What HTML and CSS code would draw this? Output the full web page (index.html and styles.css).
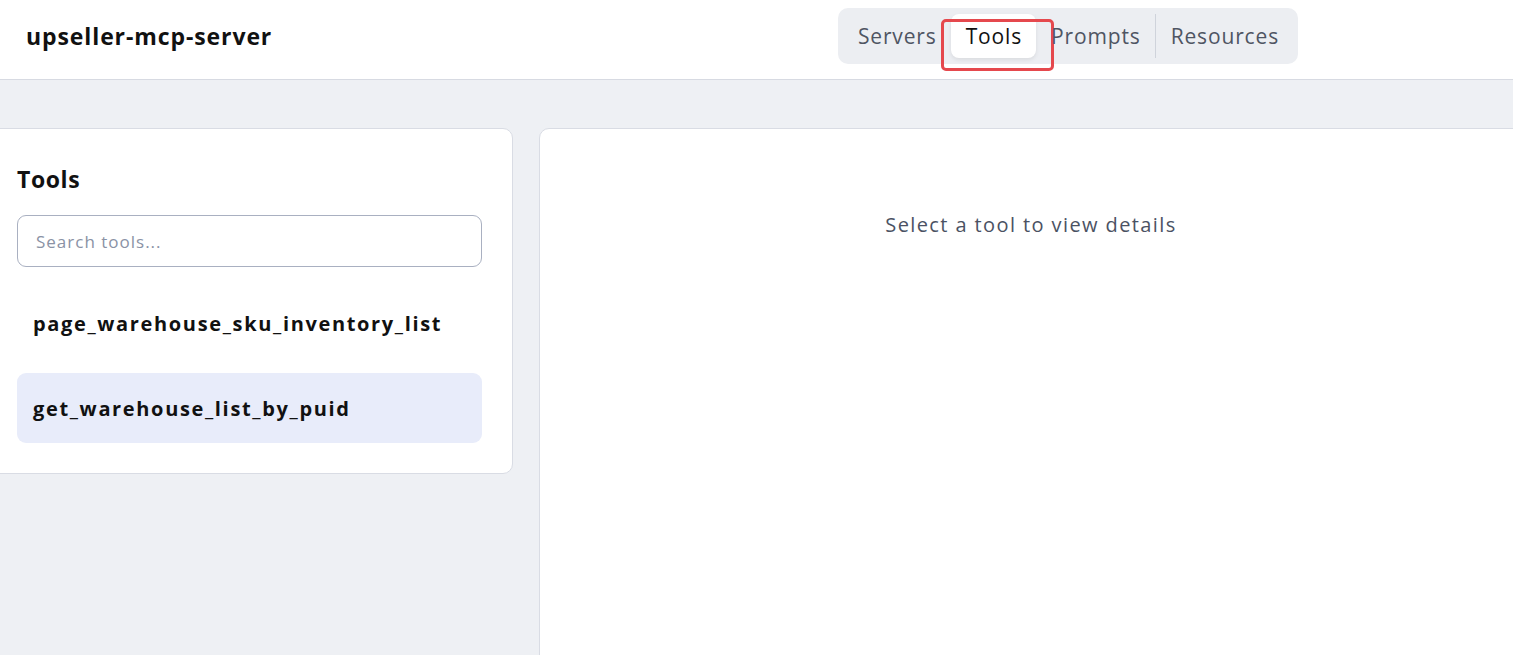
FILE: index.html
```html
<!DOCTYPE html>
<html lang="en">
  <head>
    <meta charset="UTF-8" />
    <meta name="viewport" content="width=device-width, initial-scale=1.0" />
    <title>upseller-mcp-server</title>
    <link rel="stylesheet" href="styles.css">
  </head>
  <body>
    <header class="topbar">
      <h1 class="server-name">upseller-mcp-server</h1>
      <nav class="tabs">
        <button class="tab">Servers</button>
        <button class="tab active">Tools<span class="tab-mark"></span></button>
        <button class="tab">Prompts</button>
        <span class="tab-divider"></span>
        <button class="tab">Resources</button>
      </nav>
    </header>

    <main class="workspace">
      <section class="panel tool-list">
        <h2>Tools</h2>
        <input class="search" type="text" placeholder="Search tools..." />
        <ul class="items">
          <li class="item">page_warehouse_sku_inventory_list</li>
          <li class="item selected">get_warehouse_list_by_puid</li>
        </ul>
      </section>

      <section class="panel tool-detail">
        <p class="empty">Select a tool to view details</p>
      </section>
    </main>
  </body>
</html>
```

FILE: styles.css
```css
body {
  font-family: "Open Sans", "Noto Sans", sans-serif;
  margin: 0;
  padding: 0;
  background: #eef0f4;
  color: #111;
  overflow: hidden;
  height: 655px;
}

.topbar {
  height: 79px;
  background: #ffffff;
  border-bottom: 1px solid #d7dae2;
  display: flex;
  align-items: center;
  padding-left: 26px;
}

.server-name {
  margin: 0;
  font-size: 23px;
  font-weight: 700;
  letter-spacing: 0.9px;
  position: relative;
  top: -4px;
}

.tabs {
  margin-left: auto;
  margin-right: 215px;
  align-self: flex-start;
  margin-top: 8px;
  display: flex;
  align-items: center;
  background: #eceef2;
  border-radius: 10px;
  padding: 6px 5px;
}

.tab {
  font-family: inherit;
  font-size: 21px;
  letter-spacing: 0.85px;
  color: #4f5563;
  background: none;
  border: none;
  height: 44px;
  padding: 0 14px 0 15px;
  border-radius: 8px;
  cursor: pointer;
  position: relative;
}

.tab.active {
  background: #ffffff;
  color: #111;
  box-shadow: 0 2px 4px rgba(0, 0, 0, 0.08);
}

.tab-divider {
  width: 1px;
  height: 44px;
  background: #cfd3db;
}

/* red outline around the current tab */
.tab-mark {
  position: absolute;
  left: -10px;
  right: -18px;
  top: 5px;
  bottom: -13px;
  border: 3px solid #e5484d;
  border-radius: 5px;
  pointer-events: none;
}

.workspace {
  display: grid;
  grid-template-columns: 527px 1fr;
  gap: 26px;
  width: 1537px;
  margin-left: -14px;
  padding-top: 48px;
}

.panel {
  background: #ffffff;
  border: 1px solid #d9dce4;
  border-radius: 10px;
  box-sizing: border-box;
}

.tool-list {
  padding: 30px;
  align-self: start;
}

.tool-list h2 {
  margin: 0 0 16px;
  font-size: 23px;
  font-weight: 700;
  letter-spacing: 0.6px;
  line-height: 40px;
}

.search {
  display: block;
  width: 100%;
  box-sizing: border-box;
  height: 52px;
  padding: 0 18px;
  border: 1.5px solid #a9b0c1;
  border-radius: 9px;
  font-family: inherit;
  font-size: 17px;
  letter-spacing: 1px;
  color: #333;
  outline: none;
}

.search::placeholder {
  color: #8a92a5;
}

.items {
  list-style: none;
  margin: 21px 0 0;
  padding: 0;
  display: flex;
  flex-direction: column;
  gap: 15px;
}

.item {
  height: 70px;
  display: flex;
  align-items: center;
  padding: 0 17px 0 16px;
  border-radius: 9px;
  font-size: 20px;
  font-weight: 700;
  letter-spacing: 1.65px;
  cursor: pointer;
}

.item.selected {
  background: #e8ecfa;
}

.tool-detail {
  height: 560px;
  padding-top: 80px;
}

.empty {
  margin: 0;
  text-align: center;
  font-size: 20px;
  letter-spacing: 1.4px;
  line-height: 32px;
  color: #4b5263;
}
```
